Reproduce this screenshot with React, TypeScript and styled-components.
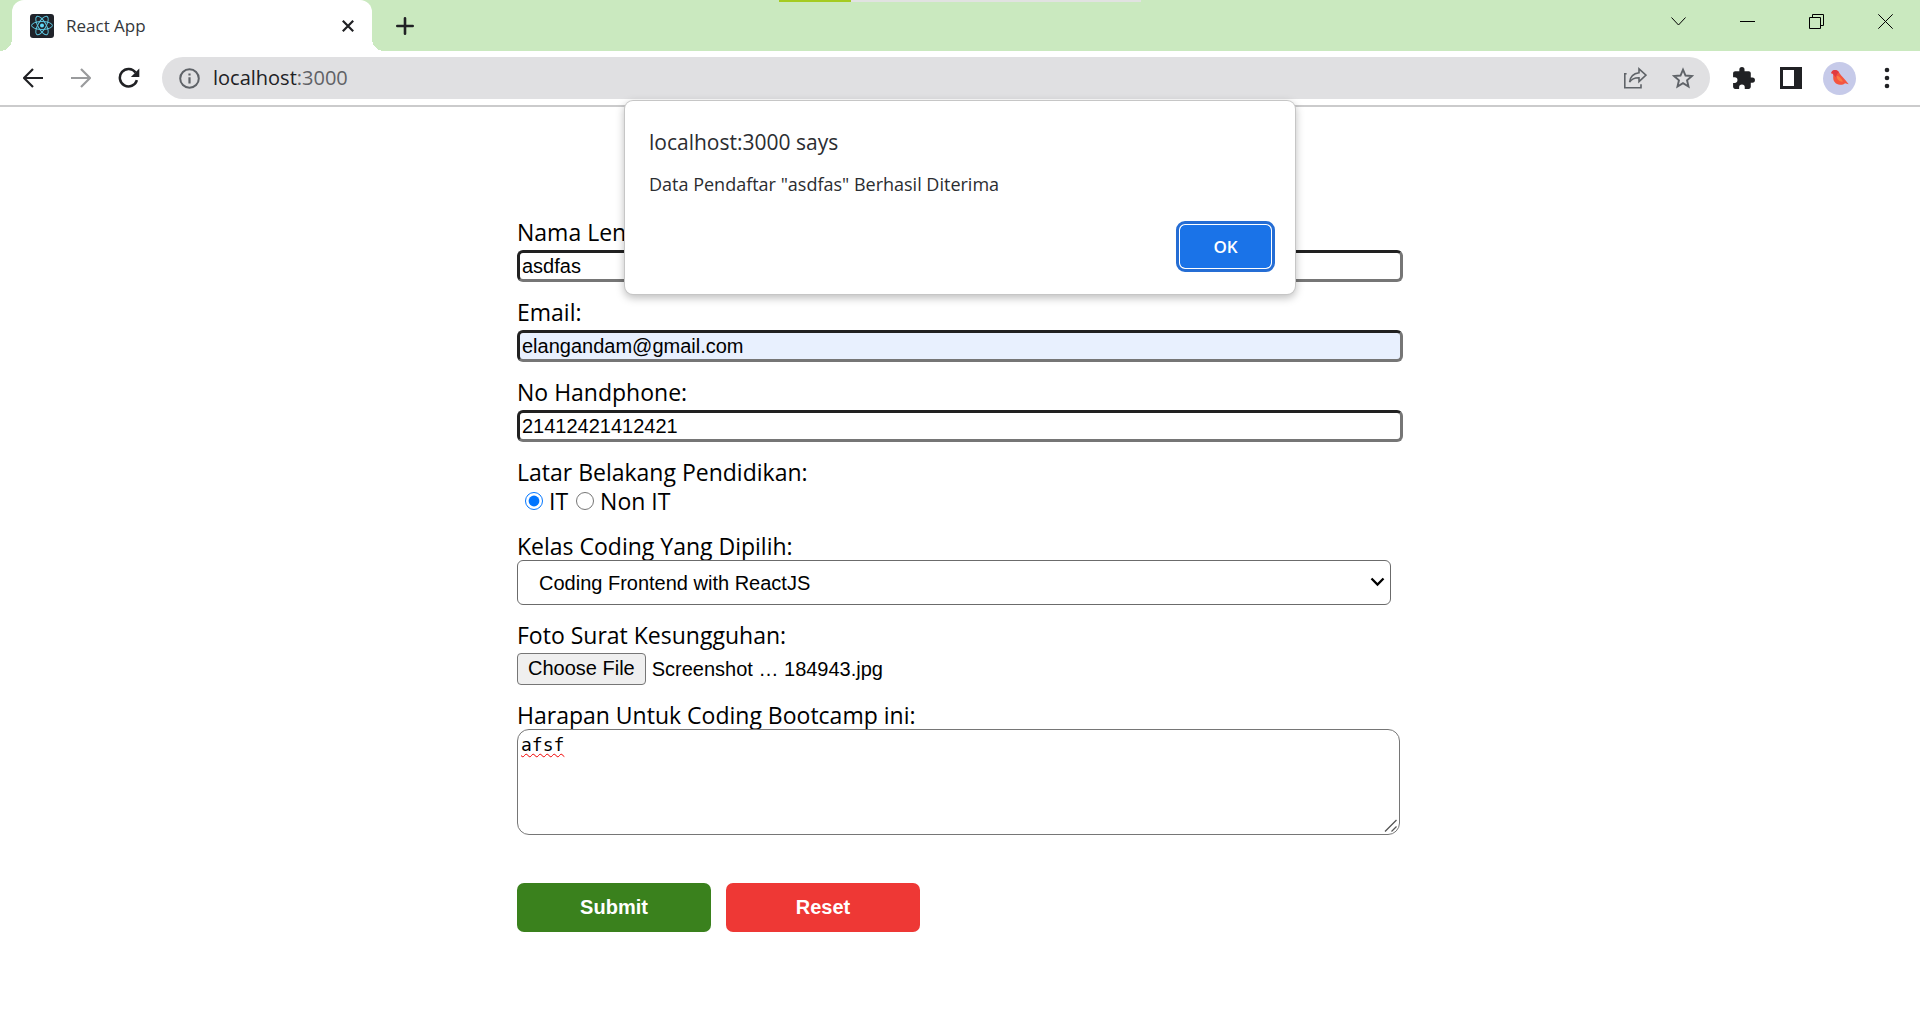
import React, { useState } from "react";
import styled, { createGlobalStyle } from "styled-components";

const UI_FONT = `"Open Sans", "Noto Sans", sans-serif`;
const CONTROL_FONT = `"Liberation Sans", Arial, sans-serif`;

const GlobalStyle = createGlobalStyle`
  *, *::before, *::after { box-sizing: border-box; }
  body { margin: 0; background: #fff; color: #000; font-family: ${UI_FONT}; }
  button, input, select, textarea { margin: 0; }
`;

/* ---------- Browser chrome ---------- */

const TabStrip = styled.div`
  position: relative;
  display: flex;
  align-items: flex-start;
  height: 51px;
  padding-left: 12px;
  background: #cae9bf;
`;

const LoadingBar = styled.div`
  position: absolute;
  top: 0;
  left: 50%;
  width: 362px;
  height: 2px;
  transform: translateX(-50%);
  background: linear-gradient(to right, #a5cb22 20%, #e1e2e1 20%);
`;

const Tab = styled.div`
  position: relative;
  display: flex;
  align-items: center;
  gap: 12px;
  width: 360px;
  height: 51px;
  padding: 0 12px 0 18px;
  border-radius: 12px 12px 0 0;
  background: #fff;

  &::before, &::after {
    content: "";
    position: absolute;
    bottom: 0;
    width: 12px;
    height: 12px;
  }
  &::before {
    left: -12px;
    background: radial-gradient(circle at 0 0, transparent 12px, #fff 12px);
  }
  &::after {
    right: -12px;
    background: radial-gradient(circle at 100% 0, transparent 12px, #fff 12px);
  }
`;

const TabTitle = styled.span`
  flex: 1;
  font-size: 17px;
  line-height: 24px;
  color: #34373b;
`;

const IconButton = styled.button<{ $size?: number; $muted?: boolean }>`
  display: flex;
  flex: none;
  align-items: center;
  justify-content: center;
  width: ${(p) => p.$size ?? 36}px;
  height: ${(p) => p.$size ?? 36}px;
  padding: 0;
  border: 0;
  border-radius: 50%;
  background: transparent;
  color: ${(p) => (p.$muted ? "#5f6368" : "#202124")};
`;

const NewTab = styled.div`
  display: flex;
  flex: 1;
  align-items: center;
  height: 51px;
  padding-left: 15px;
`;

const WindowButton = styled.button`
  display: flex;
  align-items: center;
  justify-content: center;
  width: 69px;
  height: 43px;
  padding: 0;
  border: 0;
  background: transparent;
  color: #000;
`;

const Toolbar = styled.div`
  display: flex;
  align-items: center;
  gap: 12px;
  padding: 6px 15px;
  border-bottom: 2px solid #cbcbcc;
  background: #fff;
`;

const Omnibox = styled.div`
  display: flex;
  flex: 1;
  align-items: center;
  gap: 12px;
  height: 42px;
  margin: 0 3px;
  padding: 0 9px 0 15px;
  border-radius: 21px;
  background: #e0e0e2;
`;

const Address = styled.div`
  flex: 1;
  font-size: 20px;
  line-height: 28px;
  color: #606266;
`;

const Host = styled.span`
  color: #202124;
`;

/* ---------- Alert ---------- */

const Dialog = styled.div`
  position: absolute;
  top: 101px;
  left: 50%;
  width: 670px;
  padding: 25px 22px 24px 24px;
  transform: translateX(-50%);
  border-radius: 8px;
  background: #fff;
  box-shadow: 0 0 0 1px #c6c6c6, 0 3px 8px 1px rgba(0, 0, 0, 0.26);
  color: #2b2d31;
`;

const DialogTitle = styled.h2`
  margin: 0 0 12px;
  font-size: 21px;
  font-weight: 400;
  line-height: 32px;
`;

const DialogText = styled.p`
  margin: 0;
  font-size: 18px;
  line-height: 28px;
`;

const DialogActions = styled.div`
  display: flex;
  justify-content: flex-end;
  margin-top: 25px;
`;

const OkButton = styled.button`
  width: 95px;
  height: 47px;
  border: 2px solid #fff;
  border-radius: 7px;
  outline: 3px solid #256dd4;
  outline-offset: -1px;
  background: #1a73e8;
  background-clip: padding-box;
  color: #fff;
  font: 600 17px/24px ${UI_FONT};
`;

/* ---------- Registration form ---------- */

const Page = styled.main`
  display: flex;
  justify-content: center;
  padding: 107px 24px 24px;
`;

const Form = styled.form`
  display: flex;
  flex: 1;
  flex-direction: column;
  gap: 12px;
  max-width: 886px;
`;

const Field = styled.div<{ $spaced?: boolean }>`
  display: flex;
  flex-direction: column;
  align-items: flex-start;
  gap: ${(p) => (p.$spaced ? 4 : 0)}px;
`;

const Label = styled.label`
  padding-top: 4px;
  font-size: 23px;
  line-height: 28px;
`;

const TextInput = styled.input<{ $autofilled?: boolean }>`
  width: 100%;
  height: 32px;
  padding: 0 2px;
  border: 3px solid;
  border-color: #212121 #767676 #767676 #212121;
  border-radius: 6px;
  background: ${(p) => (p.$autofilled ? "#e8f0fe" : "#fff")};
  color: #000;
  font: 20px ${CONTROL_FONT};
`;

const RadioRow = styled.div`
  display: flex;
  align-items: center;
  gap: 8px;
  padding-left: 8px;
`;

const RadioOption = styled.label`
  display: flex;
  align-items: center;
  gap: 6px;
  font-size: 23px;
  line-height: 30px;
`;

const Radio = styled.input`
  width: 18px;
  height: 18px;
  accent-color: #0075ff;
`;

const SelectBox = styled.div`
  position: relative;
  width: calc(100% - 12px);

  svg {
    position: absolute;
    top: 17px;
    right: 6px;
    pointer-events: none;
  }
`;

const Select = styled.select`
  appearance: none;
  width: 100%;
  height: 45px;
  padding: 0 21px;
  border: 1px solid #6b6b6b;
  border-radius: 6px;
  background: #fff;
  color: #000;
  font: 20px ${CONTROL_FONT};
`;

const FileRow = styled.div`
  display: flex;
  align-items: center;
  gap: 6px;
  font: 20px ${CONTROL_FONT};
`;

const HiddenFile = styled.input`
  position: absolute;
  width: 1px;
  height: 1px;
  opacity: 0;
`;

const FileButton = styled.label`
  height: 32px;
  padding: 0 10px;
  border: 1px solid #767676;
  border-radius: 4px;
  background: #efefef;
  line-height: 29px;
`;

const AreaBox = styled.div`
  position: relative;
  width: calc(100% - 3px);

  svg {
    position: absolute;
    right: 3px;
    bottom: 3px;
    pointer-events: none;
  }
`;

const TextArea = styled.textarea`
  display: block;
  width: 100%;
  height: 106px;
  padding: 3px;
  border: 1px solid #767676;
  border-radius: 12px;
  background: #fff;
  color: #000;
  font: 18px/24px "DejaVu Sans Mono", monospace;
  resize: none;
  text-decoration: underline wavy #f00000 1px;
  text-underline-offset: 2px;
`;

const Actions = styled.div`
  display: flex;
  gap: 15px;
  margin-top: 36px;
`;

const ActionButton = styled.button<{ $color: string }>`
  width: 194px;
  height: 49px;
  border: 0;
  border-radius: 7px;
  background: ${(p) => p.$color};
  color: #fff;
  font: 700 20px ${CONTROL_FONT};
`;

/* ---------- Icons ---------- */

const ReactLogo = () => (
  <svg width="24" height="24" viewBox="0 0 24 24" fill="none" aria-hidden="true">
    <rect width="24" height="24" rx="3" fill="#20232a" />
    <circle cx="12" cy="11.5" r="2" fill="#61dafb" />
    <g stroke="#5cc6e0" strokeWidth="1">
      <ellipse cx="12" cy="11.5" rx="10.4" ry="4" />
      <ellipse cx="12" cy="11.5" rx="10.4" ry="4" transform="rotate(60 12 11.5)" />
      <ellipse cx="12" cy="11.5" rx="10.4" ry="4" transform="rotate(120 12 11.5)" />
    </g>
  </svg>
);

const Cross = () => (
  <svg width="12" height="12" viewBox="0 0 12 12" stroke="currentColor" strokeWidth="2.2">
    <path d="M.8.8l10.4 10.4M11.2.8L.8 11.2" />
  </svg>
);

const Plus = () => (
  <svg width="18" height="18" viewBox="0 0 18 18" stroke="currentColor" strokeWidth="2.6" strokeLinecap="round">
    <path d="M9 1.3v15.4M1.3 9h15.4" />
  </svg>
);

const ThinChevron = () => (
  <svg width="15" height="9" viewBox="0 0 15 9" fill="none" stroke="currentColor">
    <path d="M.5.5l7 7.5 7-7.5" />
  </svg>
);

const Minimize = () => (
  <svg width="15" height="15" viewBox="0 0 15 15" stroke="currentColor">
    <path d="M0 7.5h15" />
  </svg>
);

const Restore = () => (
  <svg width="15" height="15" viewBox="0 0 15 15" fill="none" stroke="currentColor">
    <path d="M.5 3.5h11v11H.5zM3.5 3.5v-3h11v11h-3" />
  </svg>
);

const ThinCross = () => (
  <svg width="15" height="15" viewBox="0 0 15 15" stroke="currentColor">
    <path d="M.3.3l14.4 14.4M14.7.3L.3 14.7" />
  </svg>
);

const Arrow = ({ forward }: { forward?: boolean }) => (
  <svg width="20" height="20" viewBox="0 0 20 20" fill="none" stroke={forward ? "#9a9b9d" : "#202124"} strokeWidth="2.2">
    <path d={forward ? "M0 10h18.5M10 1l9 9-9 9" : "M20 10H1.5M10 1l-9 9 9 9"} />
  </svg>
);

const Reload = () => (
  <svg width="22" height="22" viewBox="0 0 22 22" fill="none">
    <path d="M18.9 13.2A8.7 8.7 0 1 1 17.6 5.6" stroke="#202124" strokeWidth="2.5" />
    <path d="M21.3 1.6v8.4h-8.4z" fill="#202124" />
  </svg>
);

const Info = () => (
  <svg width="21" height="21" viewBox="0 0 21 21" fill="none" stroke="currentColor" strokeWidth="2">
    <circle cx="10.5" cy="10.5" r="9.3" />
    <path d="M10.5 9.3v6.2M10.5 5.4v2.2" strokeWidth="2.2" />
  </svg>
);

const Share = () => (
  <svg width="24" height="22" viewBox="0 0 24 22" fill="none" stroke="currentColor" strokeWidth="1.6">
    <path d="M3.600 6.800H1.800v14h16.200v-3.600" />
    <path d="M16 1.800l7 6.400-7 6.400v-3.900c-4.600-.1-7.500 1.300-9.400 4.500.5-5 3.800-8.700 9.400-9.400z" />
  </svg>
);

const Star = () => (
  <svg width="22" height="22" viewBox="0 0 22 22" fill="none" stroke="currentColor" strokeWidth="1.9">
    <path d="M11 2.600l2.500 5.900 6.400.55-4.850 4.200 1.450 6.250L11 16.200l-5.500 3.300 1.450-6.250-4.850-4.200 6.400-.55z" />
  </svg>
);

const Puzzle = () => (
  <svg width="25" height="25" viewBox="0 0 24 24" fill="currentColor">
    <path d="M20.500 11H19V7c0-1.100-.9-2-2-2h-4V3.500a2.500 2.500 0 0 0-5 0V5H4c-1.100 0-2 .9-2 2v3.800h1.500a2.700 2.700 0 0 1 0 5.400H2V20c0 1.100.9 2 2 2h3.800v-1.500a2.700 2.700 0 0 1 5.400 0V22H17c1.100 0 2-.9 2-2v-4h1.500a2.500 2.500 0 0 0 0-5z" />
  </svg>
);

const SidePanel = () => (
  <svg width="22" height="22" viewBox="0 0 22 22">
    <path fillRule="evenodd" d="M0 0h22v22H0zM3 3v16h11V3z" fill="#202124" />
  </svg>
);

const Avatar = () => (
  <svg width="33" height="33" viewBox="0 0 33 33">
    <circle cx="16.5" cy="16.5" r="16.5" fill="#c6cae9" />
    <path d="M8.200 11.200c.6-2.200 2-3.300 4-3.200 2.300.1 3.400 1.600 4.500 3.400 1.800 2.700 4.600 4.900 6 7.200l3 3.600-3.700-.9c-1.400 1.200-3.200 1.700-5 1.500-4.200-.4-6.700-3.200-6.800-7.100 0-1.700.2-2.800-.3-3.800z" fill="#f4553f" />
    <path d="M8.200 11.200c.6-2.200 2-3.300 4-3.200 1.800.1 2.800 1 3.600 2.200-1.500 1.200-2.800 2.800-2.400 5.300-1.500-1-3-2.700-3.500-4.300z" fill="#e03a41" />
    <path d="M13.600 13.800c2.600.3 5 2.600 6.300 5.800-3.200.3-6.200-1.700-6.300-5.800z" fill="#fb7a43" />
  </svg>
);

const Dots = () => (
  <svg width="6" height="22" viewBox="0 0 6 22" fill="currentColor">
    <circle cx="3" cy="3" r="2.300" />
    <circle cx="3" cy="11" r="2.300" />
    <circle cx="3" cy="19" r="2.300" />
  </svg>
);

const SelectChevron = () => (
  <svg width="15" height="10" viewBox="0 0 15 10" fill="none" stroke="#000" strokeWidth="2.300">
    <path d="M1.500 1.500l6 6 6-6" />
  </svg>
);

const Grip = () => (
  <svg width="13" height="13" viewBox="0 0 13 13" stroke="#555" strokeWidth="1.300">
    <path d="M1 12.500L12.500 1M7.500 12.500l5-5" />
  </svg>
);

/* ---------- Page ---------- */

export default function App() {
  const [track, setTrack] = useState("it");
  const [fileName, setFileName] = useState("Screenshot … 184943.jpg");

  return (
    <>
      <GlobalStyle />
      <header>
        <TabStrip>
          <LoadingBar />
          <Tab>
            <ReactLogo />
            <TabTitle>React App</TabTitle>
            <IconButton $size={24} aria-label="Close tab"><Cross /></IconButton>
          </Tab>
          <NewTab>
            <IconButton aria-label="New tab"><Plus /></IconButton>
          </NewTab>
          <WindowButton aria-label="Search tabs"><ThinChevron /></WindowButton>
          <WindowButton aria-label="Minimize"><Minimize /></WindowButton>
          <WindowButton aria-label="Restore"><Restore /></WindowButton>
          <WindowButton aria-label="Close window"><ThinCross /></WindowButton>
        </TabStrip>
        <Toolbar>
          <IconButton aria-label="Back"><Arrow /></IconButton>
          <IconButton aria-label="Forward"><Arrow forward /></IconButton>
          <IconButton aria-label="Reload"><Reload /></IconButton>
          <Omnibox>
            <IconButton $size={24} $muted aria-label="Site information"><Info /></IconButton>
            <Address><Host>localhost</Host>:3000</Address>
            <IconButton $muted aria-label="Share"><Share /></IconButton>
            <IconButton $muted aria-label="Bookmark"><Star /></IconButton>
          </Omnibox>
          <IconButton aria-label="Extensions"><Puzzle /></IconButton>
          <IconButton aria-label="Side panel"><SidePanel /></IconButton>
          <IconButton aria-label="Profile"><Avatar /></IconButton>
          <IconButton aria-label="Menu"><Dots /></IconButton>
        </Toolbar>
      </header>

      <Page>
        <Form onSubmit={(e) => e.preventDefault()}>
          <Field $spaced>
            <Label htmlFor="nama">Nama Lengkap:</Label>
            <TextInput id="nama" type="text" defaultValue="asdfas" />
          </Field>
          <Field $spaced>
            <Label htmlFor="email">Email:</Label>
            <TextInput id="email" type="email" defaultValue="elangandam@gmail.com" $autofilled />
          </Field>
          <Field $spaced>
            <Label htmlFor="phone">No Handphone:</Label>
            <TextInput id="phone" type="tel" defaultValue="21412421412421" />
          </Field>
          <Field role="radiogroup" aria-labelledby="latar">
            <Label as="span" id="latar">Latar Belakang Pendidikan:</Label>
            <RadioRow>
              <RadioOption>
                <Radio type="radio" name="latar" checked={track === "it"} onChange={() => setTrack("it")} />
                IT
              </RadioOption>
              <RadioOption>
                <Radio type="radio" name="latar" checked={track === "non"} onChange={() => setTrack("non")} />
                Non IT
              </RadioOption>
            </RadioRow>
          </Field>
          <Field>
            <Label htmlFor="kelas">Kelas Coding Yang Dipilih:</Label>
            <SelectBox>
              <Select id="kelas" defaultValue="frontend">
                <option value="frontend">Coding Frontend with ReactJS</option>
              </Select>
              <SelectChevron />
            </SelectBox>
          </Field>
          <Field $spaced>
            <Label htmlFor="foto">Foto Surat Kesungguhan:</Label>
            <FileRow>
              <HiddenFile
                id="foto"
                type="file"
                onChange={(e) => setFileName(e.target.files?.[0]?.name ?? "No file chosen")}
              />
              <FileButton htmlFor="foto">Choose File</FileButton>
              <span>{fileName}</span>
            </FileRow>
          </Field>
          <Field>
            <Label htmlFor="harapan">Harapan Untuk Coding Bootcamp ini:</Label>
            <AreaBox>
              <TextArea id="harapan" defaultValue="afsf" />
              <Grip />
            </AreaBox>
          </Field>
          <Actions>
            <ActionButton type="submit" $color="#3a811d">Submit</ActionButton>
            <ActionButton type="reset" $color="#ee3835">Reset</ActionButton>
          </Actions>
        </Form>
      </Page>

      <Dialog role="alertdialog" aria-labelledby="alert-title" aria-describedby="alert-text">
        <DialogTitle id="alert-title">localhost:3000 says</DialogTitle>
        <DialogText id="alert-text">Data Pendaftar "asdfas" Berhasil Diterima</DialogText>
        <DialogActions>
          <OkButton type="button">OK</OkButton>
        </DialogActions>
      </Dialog>
    </>
  );
}
